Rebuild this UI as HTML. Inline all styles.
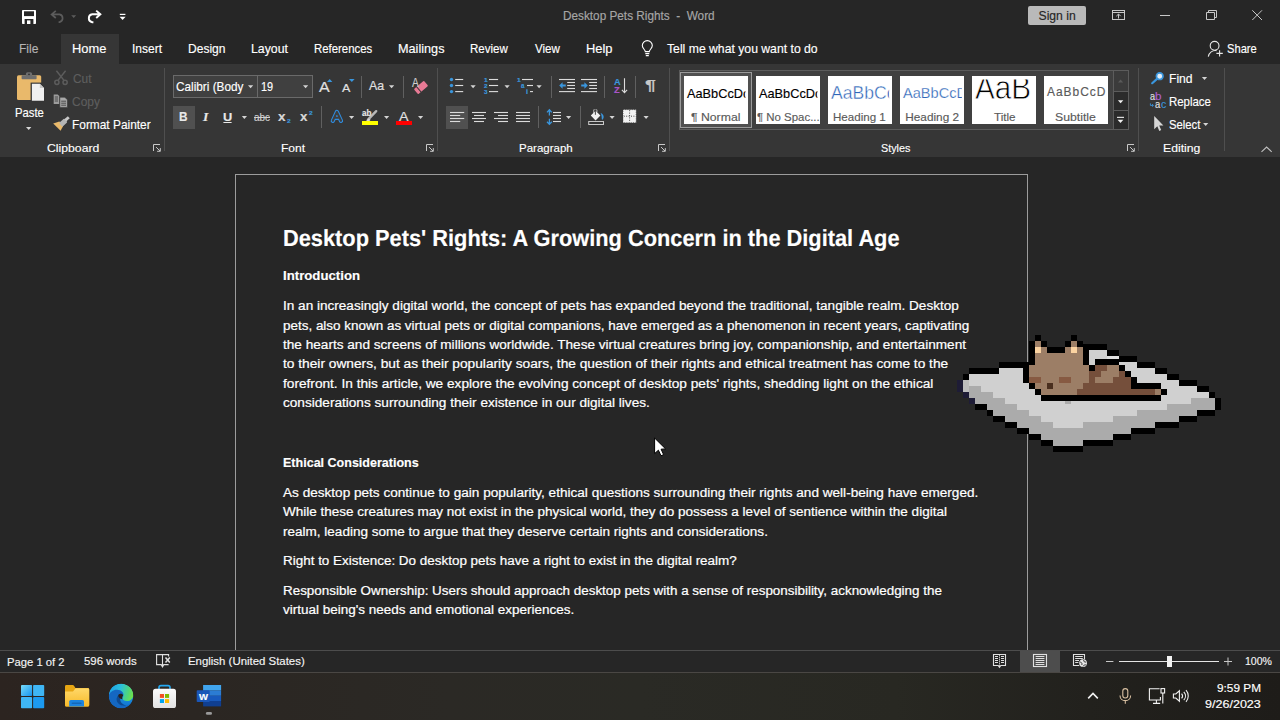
<!DOCTYPE html>
<html lang="en">
<head>
<meta charset="utf-8">
<title>Desktop Pets Rights - Word</title>
<style>
html,body{margin:0;padding:0;background:#262626;}
body{width:1280px;height:720px;overflow:hidden;font-family:"Liberation Sans",sans-serif;}
#screen{position:relative;width:1280px;height:720px;overflow:hidden;background:#262626;}
#screen div,#screen svg,#screen span{position:absolute;}
.t{white-space:pre;line-height:1;transform-origin:0 0;font-family:"Liberation Sans",sans-serif;-webkit-text-stroke:0.15px;}
#titlebar{left:0;top:0;width:1280px;height:64px;background:#262626;}
#hometab{left:61px;top:34px;width:58px;height:30px;background:#363636;}
#ribbon{left:0;top:64px;width:1280px;height:93px;background:#363636;}
#docarea{left:0;top:157px;width:1280px;height:493px;background:#262626;}
#page{left:235px;top:174px;width:791px;height:500px;border:1px solid #9c9c9c;background:#262626;}
#statusbar{left:0;top:650px;width:1280px;height:22px;background:#262626;border-top:1px solid #4c4c4c;box-sizing:border-box;}
#taskbar{left:0;top:672px;width:1280px;height:48px;background:linear-gradient(90deg,#2c2420 0%,#2b2622 15%,#2b2925 35%,#2a2a25 50%,#282822 70%,#22211d 85%,#1e1c19 100%);border-top:1px solid #4a4744;box-sizing:border-box;}
.vsep{width:1px;background:#606060;}
.gsep{width:1px;background:#4f4f4f;top:68px;height:83px;}
.hl{background:#505050;}
.cell{background:#ffffff;top:76px;width:64px;height:48px;}

</style>
</head>
<body>
<div id="screen">
<div id="titlebar"></div>
<div id="hometab"></div>
<div id="ribbon"></div>
<div id="docarea"></div>
<div id="page"></div>
<div id="statusbar"></div>
<div id="taskbar"></div>
<!-- group separators -->
<div class="gsep" style="left:164px"></div>
<div class="gsep" style="left:437px"></div>
<div class="gsep" style="left:669px"></div>
<div class="gsep" style="left:1138px"></div>
<div class="gsep" style="left:1224px"></div>
<!-- small separators -->
<div class="vsep" style="left:361px;top:76px;height:22px"></div>
<div class="vsep" style="left:403px;top:76px;height:22px"></div>
<div class="vsep" style="left:551px;top:76px;height:22px"></div>
<div class="vsep" style="left:604px;top:76px;height:22px"></div>
<div class="vsep" style="left:635px;top:76px;height:22px"></div>
<div class="vsep" style="left:321px;top:106px;height:22px"></div>
<div class="vsep" style="left:538px;top:106px;height:22px"></div>
<div class="vsep" style="left:580px;top:106px;height:22px"></div>
<!-- font boxes -->
<div style="left:173px;top:75px;width:85px;height:23px;box-sizing:border-box;border:1px solid #6a6a6a;background:#404040"></div>
<div style="left:257px;top:75px;width:56px;height:23px;box-sizing:border-box;border:1px solid #6a6a6a;background:#404040"></div>
<!-- toggled buttons -->
<div class="hl" style="left:173px;top:106px;width:22px;height:23px"></div>
<div class="hl" style="left:446px;top:106px;width:22px;height:23px"></div>
<!-- styles gallery -->
<div style="left:679px;top:70px;width:450px;height:60px;box-sizing:border-box;border:1px solid #5c5c5c;background:#404040"></div>
<div style="left:680px;top:72px;width:72px;height:56px;box-sizing:border-box;border:1px solid #9a9a9a;background:#505050"></div>
<div class="cell" style="left:684px"></div>
<div class="cell" style="left:756px"></div>
<div class="cell" style="left:828px"></div>
<div class="cell" style="left:900px"></div>
<div class="cell" style="left:972px"></div>
<div class="cell" style="left:1044px"></div>
<div style="left:1113px;top:70px;width:16px;height:60px;box-sizing:border-box;border:1px solid #5c5c5c;background:#2b2b2b"></div>
<div style="left:1114px;top:71px;width:14px;height:20px;background:#3b3b3b"></div>
<div style="left:1113px;top:91px;width:16px;height:1px;background:#5c5c5c"></div>
<div style="left:1113px;top:110px;width:16px;height:1px;background:#5c5c5c"></div>
<!-- sign in -->
<div style="left:1028px;top:6px;width:58px;height:19px;background:#b9b9b9;border-radius:2px"></div>
<!-- status bar view button -->
<div style="left:1020px;top:651px;width:40px;height:21px;background:#4d4d4d"></div>
<!-- zoom slider -->
<div style="left:1119px;top:661px;width:100px;height:1px;background:#e6e6e6"></div>
<div style="left:1167px;top:656px;width:5px;height:11px;background:#f2f2f2"></div>

<svg id="icons" style="left:0;top:0" width="1280" height="720" viewBox="0 0 1280 720" fill="none">
<!-- ===== title bar: quick access ===== -->
<g id="qat">
<rect x="22" y="10" width="14" height="14" rx="0.8" fill="#ffffff"/>
<rect x="24" y="11.3" width="10" height="4.8" fill="#262626"/>
<rect x="24.6" y="19" width="8.8" height="5" fill="#262626"/>
<rect x="27" y="20.4" width="3.4" height="3.6" fill="#ffffff"/>
<path d="M55.8 10.8 L51.6 14.4 L55.8 18 M52 14.4 H59.5 A4 4 0 0 1 59.5 22.2 H58.6" stroke="#5c5c5c" stroke-width="1.7"/>
<path d="M71.2 15.2 h5 l-2.5 2.8 z" fill="#5c5c5c"/>
<path d="M96.2 10.6 L100.4 14.3 L96.2 18 M100 14.3 H92.2 A4 4 0 0 0 92.2 22.2 H93.4" stroke="#ffffff" stroke-width="1.9"/>
<rect x="119.8" y="13.8" width="5.6" height="1.2" fill="#ffffff"/>
<path d="M119.6 16.8 h6 l-3 3.2 z" fill="#ffffff"/>
</g>
<!-- ===== window controls ===== -->
<g id="wincontrols" stroke="#c8c8c8" stroke-width="1">
<rect x="1112.5" y="10.5" width="12" height="9"/>
<path d="M1112.5 12.5 H1124.5 M1118.5 14.2 V18.5 M1116.3 16.2 L1118.5 14 L1120.7 16.2"/>
<path d="M1160 15.5 H1170"/>
<path d="M1206.5 12.5 h8 v7 h-8 z M1208.5 12.5 v-2 h8 v7 h-2"/>
<path d="M1252.3 10.3 L1262 20 M1262 10.3 L1252.3 20"/>
</g>
<!-- ===== tell me / share ===== -->
<g id="tellme" stroke="#ffffff" stroke-width="1.1">
<path d="M645.3 51.6 C645.3 49.6 642.3 48.6 642.3 45.6 A5 5 0 0 1 652.3 45.6 C652.3 48.6 649.3 49.6 649.3 51.6 Z"/>
<path d="M645.3 53.6 H649.3 M645.8 55.6 H648.8"/>
</g>
<g id="share" stroke="#e6e6e6" stroke-width="1.1">
<circle cx="1214.6" cy="45.8" r="4.4"/>
<path d="M1208.3 56.6 A7.2 7.2 0 0 1 1216.5 50.6"/>
<path d="M1219.6 50.2 V56.6 M1216.4 53.4 H1222.8"/>
</g>
<!-- ===== clipboard group ===== -->
<g id="clipboard">
<rect x="17" y="75.2" width="24.2" height="24.8" rx="1.6" fill="#e9b96b"/>
<rect x="25.9" y="72.2" width="6.2" height="5" rx="1.6" fill="#6e6e6e"/>
<circle cx="29" cy="74.4" r="1" fill="#363636"/>
<rect x="21.6" y="75.3" width="15" height="4" rx="0.8" fill="#6e6e6e"/>
<rect x="30.6" y="82.6" width="14.4" height="19" fill="#363636"/>
<path d="M31.9 83.8 H39.8 L44 88 V100.8 H31.9 Z" fill="#f0f0f0"/>
<path d="M39.8 83.8 V88 H44 Z" fill="#c8c8c8"/>
<path d="M26 127 h5.4 l-2.7 3 z" fill="#d8d8d8"/>
<!-- cut -->
<g stroke="#5c5c5c" stroke-width="1.5">
<path d="M56.4 70.8 L64.2 80.6 M65.6 70.8 L57.8 80.6"/>
<circle cx="56.9" cy="82.3" r="2.1"/>
<circle cx="65.1" cy="82.3" r="2.1"/>
</g>
<!-- copy -->
<path d="M53.7 94.5 h4 l1.6 1.6 v8 h-5.6 z" fill="#9c9c9c"/>
<path d="M54.8 97 h3.2 M54.8 99 h3.2 M54.8 101 h3.2" stroke="#363636" stroke-width="0.8"/>
<path d="M59.8 97.2 h5 l2.6 2.6 v7.6 h-7.6 z" fill="#a8a8a8" stroke="#363636" stroke-width="0.6"/>
<path d="M61.2 101.2 h4.8 M61.2 103.2 h4.8 M61.2 105.2 h4.8" stroke="#363636" stroke-width="0.8"/>
<!-- format painter -->
<path d="M53.2 123.4 L59.4 121.4 L63.4 125.6 L60.6 130.8 Z" fill="#e9b96b"/>
<rect x="59.8" y="120.1" width="6.8" height="5" rx="0.8" fill="#b4b4b4" transform="rotate(-42 63.2 122.6)"/>
<rect x="64.6" y="117.4" width="4.8" height="2.8" fill="#c8c8c8" transform="rotate(-42 67 118.8)"/>
</g>
<!-- ===== dropdown arrows & launchers ===== -->
<g id="arrows">
<path d="M248 85.2 h5.2 l-2.6 3 z" fill="#d4d4d4"/>
<path d="M303 85.2 h5.2 l-2.6 3 z" fill="#d4d4d4"/>
<path d="M241.8 116 h5.2 l-2.6 3 z" fill="#d4d4d4"/>
<path d="M389 85.3 h5.2 l-2.6 3 z" fill="#d4d4d4"/>
<path d="M349 116 h5.2 l-2.6 3 z" fill="#d4d4d4"/>
<path d="M384 116 h5.2 l-2.6 3 z" fill="#d4d4d4"/>
<path d="M418 116 h5.2 l-2.6 3 z" fill="#d4d4d4"/>
<path d="M470.5 85.3 h5.2 l-2.6 3 z" fill="#d4d4d4"/>
<path d="M504.5 85.3 h5.2 l-2.6 3 z" fill="#d4d4d4"/>
<path d="M536.5 85.3 h5.2 l-2.6 3 z" fill="#d4d4d4"/>
<path d="M566 116 h5.2 l-2.6 3 z" fill="#d4d4d4"/>
<path d="M609.5 116 h5.2 l-2.6 3 z" fill="#d4d4d4"/>
<path d="M643.5 116 h5.2 l-2.6 3 z" fill="#d4d4d4"/>
<path d="M1201.9 77.1 h5.2 l-2.6 3 z" fill="#d4d4d4"/>
<path d="M1203.1 123.1 h5.2 l-2.6 3 z" fill="#d4d4d4"/>
<path d="M153.5 151.0 V144.5 H160.0" stroke="#c8c8c8" stroke-width="1"/><path d="M156.1 147.1 L160.1 151.1 M157.1 151.3 H160.3 V148.1" stroke="#c8c8c8" stroke-width="1"/>
<path d="M426.5 151.0 V144.5 H433.0" stroke="#c8c8c8" stroke-width="1"/><path d="M429.1 147.1 L433.1 151.1 M430.1 151.3 H433.3 V148.1" stroke="#c8c8c8" stroke-width="1"/>
<path d="M658.5 151.0 V144.5 H665.0" stroke="#c8c8c8" stroke-width="1"/><path d="M661.1 147.1 L665.1 151.1 M662.1 151.3 H665.3 V148.1" stroke="#c8c8c8" stroke-width="1"/>
<path d="M1127.5 151.0 V144.5 H1134.0" stroke="#c8c8c8" stroke-width="1"/><path d="M1130.1 147.1 L1134.1 151.1 M1131.1 151.3 H1134.3 V148.1" stroke="#c8c8c8" stroke-width="1"/>
</g>
<!-- ===== font group ===== -->
<g id="fontgroup">
<path d="M327 82 h5.4 l-2.7 -2.9 z" fill="#3a96dd"/>
<path d="M349 79.1 h5.6 l-2.8 3 z" fill="#3a96dd"/>
<rect x="223.4" y="122" width="8.2" height="1" fill="#e8e8e8"/>
<!-- clear formatting eraser -->
<g transform="rotate(-40 421 87.5)">
<rect x="414.4" y="84.2" width="13.2" height="6.6" rx="1" fill="#e87a95"/>
<rect x="417.6" y="84" width="1" height="7" fill="#363636"/>
</g>
<!-- text effects -->
<path d="M332.8 120.8 L336.9 111.9 L341 120.8 M334.4 117.8 H339.4" stroke="#2f8de0" stroke-width="4.2" stroke-linejoin="round" stroke-linecap="round"/>
<path d="M332.8 120.8 L336.9 111.9 L341 120.8 M334.4 117.8 H339.4" stroke="#3e3e3e" stroke-width="2.1" stroke-linejoin="round" stroke-linecap="round"/>
<!-- highlighter -->
<path d="M376.2 111.2 L368 119.6" stroke="#b8b8b8" stroke-width="2.4" stroke-linecap="round"/>
<path d="M368.6 118.4 L366 121 H369.4 L370.6 119.8 Z" fill="#d8d8d8"/>
<rect x="362" y="121" width="16" height="4" fill="#ffff00"/>
<rect x="396" y="121" width="16" height="4" fill="#ff0000"/>
</g>
<!-- ===== paragraph group ===== -->
<g id="paragraph">
<circle cx="451.5" cy="79.5" r="1.7" fill="#3a96dd"/>
<rect x="455.2" y="78.95" width="8.00" height="1.1" fill="#dcdcdc"/>
<rect x="489" y="78.95" width="9.10" height="1.1" fill="#dcdcdc"/>
<circle cx="451.5" cy="85.5" r="1.7" fill="#3a96dd"/>
<rect x="455.2" y="84.95" width="8.00" height="1.1" fill="#dcdcdc"/>
<rect x="489" y="84.95" width="9.10" height="1.1" fill="#dcdcdc"/>
<circle cx="451.5" cy="91.6" r="1.7" fill="#3a96dd"/>
<rect x="455.2" y="91.05" width="8.00" height="1.1" fill="#dcdcdc"/>
<rect x="489" y="91.05" width="9.10" height="1.1" fill="#dcdcdc"/>
<rect x="522" y="78.95" width="11.00" height="1.1" fill="#dcdcdc"/>
<rect x="527" y="84.95" width="6.00" height="1.1" fill="#dcdcdc"/>
<rect x="530" y="91.05" width="3.00" height="1.1" fill="#dcdcdc"/>
<rect x="450" y="111.95" width="14.20" height="1.1" fill="#dcdcdc"/>
<rect x="450" y="114.95" width="10.20" height="1.1" fill="#dcdcdc"/>
<rect x="450" y="117.95" width="14.20" height="1.1" fill="#dcdcdc"/>
<rect x="450" y="120.95" width="10.20" height="1.1" fill="#dcdcdc"/>
<rect x="472" y="111.95" width="14.00" height="1.1" fill="#dcdcdc"/>
<rect x="474" y="114.95" width="10.00" height="1.1" fill="#dcdcdc"/>
<rect x="472" y="117.95" width="14.00" height="1.1" fill="#dcdcdc"/>
<rect x="474" y="120.95" width="10.00" height="1.1" fill="#dcdcdc"/>
<rect x="494" y="111.95" width="14.00" height="1.1" fill="#dcdcdc"/>
<rect x="498" y="114.95" width="10.00" height="1.1" fill="#dcdcdc"/>
<rect x="494" y="117.95" width="14.00" height="1.1" fill="#dcdcdc"/>
<rect x="498" y="120.95" width="10.00" height="1.1" fill="#dcdcdc"/>
<rect x="516" y="111.95" width="14.00" height="1.1" fill="#dcdcdc"/>
<rect x="516" y="114.95" width="14.00" height="1.1" fill="#dcdcdc"/>
<rect x="516" y="117.95" width="14.00" height="1.1" fill="#dcdcdc"/>
<rect x="516" y="120.95" width="14.00" height="1.1" fill="#dcdcdc"/>
<rect x="553" y="111.95" width="8.00" height="1.1" fill="#dcdcdc"/>
<rect x="553" y="114.95" width="8.00" height="1.1" fill="#dcdcdc"/>
<rect x="553" y="117.95" width="8.00" height="1.1" fill="#dcdcdc"/>
<rect x="553" y="120.95" width="8.00" height="1.1" fill="#dcdcdc"/>
<path d="M549.4 110 V115.4 M547 112.4 L549.4 109.8 L551.8 112.4 M549.4 118.8 V124.2 M547 121.8 L549.4 124.4 L551.8 121.8" stroke="#3a96dd" stroke-width="1.3"/>
<rect x="559" y="78.95" width="16.00" height="1.1" fill="#dcdcdc"/>
<rect x="559" y="91.05" width="16.00" height="1.1" fill="#dcdcdc"/>
<rect x="567.2" y="81.95" width="7.80" height="1.1" fill="#dcdcdc"/>
<rect x="567.2" y="84.95" width="7.80" height="1.1" fill="#dcdcdc"/>
<rect x="567.2" y="87.95" width="7.80" height="1.1" fill="#dcdcdc"/>
<rect x="581" y="78.95" width="16.00" height="1.1" fill="#dcdcdc"/>
<rect x="581" y="91.05" width="16.00" height="1.1" fill="#dcdcdc"/>
<rect x="589.2" y="81.95" width="7.80" height="1.1" fill="#dcdcdc"/>
<rect x="589.2" y="84.95" width="7.80" height="1.1" fill="#dcdcdc"/>
<rect x="589.2" y="87.95" width="7.80" height="1.1" fill="#dcdcdc"/>
<path d="M559.2 85.5 L562.6 82.2 V84.4 H565.8 V86.6 H562.6 V88.8 Z" fill="#3a96dd"/>
<path d="M587.8 85.5 L584.4 82.2 V84.4 H581.2 V86.6 H584.4 V88.8 Z" fill="#3a96dd"/>
<path d="M624.5 78.2 V92.4 M621.9 89.8 L624.5 92.6 L627.1 89.8" stroke="#dcdcdc" stroke-width="1.1"/>
<path d="M593.6 113 V109.8 H597 V112" stroke="#bdbdbd" stroke-width="0.8"/>
<path d="M595.6 110.8 L600.4 115.6 L595.6 120.4 L590.8 115.6 Z" fill="#f2f2f2"/>
<path d="M595.4 109.6 V114.8" stroke="#363636" stroke-width="0.9"/>
<path d="M600.6 113 C604 114.4 604.6 117.6 602.4 119.8 C601.6 119.6 601.8 118.6 601.6 116.6 C601.5 115.4 601.2 114.2 600.6 113 Z" fill="#3a96dd"/>
<rect x="588.7" y="121.5" width="14.8" height="3" stroke="#c8c8c8" stroke-width="1"/>
<rect x="623" y="109.6" width="13.2" height="13.2" fill="#f2f2f2"/>
<path d="M623.8 116.2 H635.6 M629.6 110.2 V122.4" stroke="#363636" stroke-width="0.9" stroke-dasharray="1 1.4"/>
<path d="M623 109.6 h13.2 v13.2 h-13.2 z" stroke="#363636" stroke-width="0.7" stroke-dasharray="1 1.2"/>
</g>
<!-- ===== gallery scroll ===== -->
<g id="galscroll">
<path d="M1118 82.4 h5.2 l-2.6 -3 z" fill="#5a5a5a"/>
<path d="M1117.9 100.2 h5.4 l-2.7 3 z" fill="#f0f0f0"/>
<rect x="1117" y="116.8" width="7" height="1.1" fill="#f0f0f0"/>
<path d="M1117.6 119.8 h5.8 l-2.9 3.2 z" fill="#f0f0f0"/>
</g>
<!-- ===== editing group ===== -->
<g id="editing">
<path d="M1157 78.9 L1152.2 83.2" stroke="#3a96dd" stroke-width="2.2" stroke-linecap="round"/>
<circle cx="1159.7" cy="76.2" r="3.3" fill="#e4eef8" stroke="#3a96dd" stroke-width="1.7"/>
<path d="M1150.4 103.4 V105.4 H1153.2 M1152 104.2 L1153.4 105.4 L1152 106.6" stroke="#3a96dd" stroke-width="0.9"/>
<path d="M1154.2 116 V129.2 L1157.3 126.3 L1159.3 130.9 L1161.2 130 L1159.2 125.6 L1163.4 125.4 Z" fill="#d6d6d6"/>
</g>
<!-- ===== status bar icons ===== -->
<g id="statusicons" stroke="#e0e0e0" stroke-width="1">
<!-- proofing -->
<path d="M162.5 654.6 H156.6 V664.6 H161.2 L162.5 666.8 L163.8 664.6 H168.6 M162.5 654.6 V666 M162.5 654.6 H168.6 V656.4" stroke-width="1.1"/>
<path d="M165.5 657.4 L169.8 662.6 M169.8 657.4 L165.5 662.6" stroke-width="1.5"/>
<!-- read mode -->
<path d="M999.5 654.5 H993.5 V665.5 H998.2 L999.5 667.4 L1000.8 665.5 H1005.5 V654.5 H999.5" stroke-width="1.1"/>
<path d="M999.5 654.6 V666.4" stroke-width="1" stroke-dasharray="1.2 0.8"/>
<path d="M995 656.5 H998 M995 658.5 H998 M995 660.5 H998 M995 662.5 H998 M1001 656.5 H1004 M1001 658.5 H1004 M1001 660.5 H1004 M1001 662.5 H1004" stroke-width="1"/>
<!-- print layout -->
<rect x="1033.5" y="654.5" width="13" height="12" stroke-width="1.1"/>
<path d="M1035.6 656.5 H1044.4 M1035.6 658.5 H1044.4 M1035.6 660.5 H1044.4 M1035.6 662.5 H1044.4 M1035.6 664.5 H1044.4" stroke-width="1"/>
<!-- web layout -->
<path d="M1079.2 665.5 H1073.5 V654.5 H1084.5 V659.2" stroke-width="1.1"/>
<path d="M1075.2 656.5 H1082.8 M1075.2 658.5 H1082.8 M1075.2 660.5 H1079 M1075.2 662.5 H1078.4" stroke-width="1"/>
<circle cx="1083.1" cy="663.1" r="3.9" fill="#e6e6e6" stroke="none"/>
<path d="M1080.2 662 C1081.6 662.2 1082.4 663.4 1081.8 665 M1083.8 660 C1083.4 661.4 1084.4 662.4 1086.2 662 M1083 666.4 C1083.6 665.2 1084.8 664.6 1086.4 665" stroke="#262626" stroke-width="0.9"/>
<!-- zoom +/- -->
<path d="M1106 661.5 H1113.4 M1224 661.5 H1232 M1228 657.5 V665.5" stroke="#c8c8c8"/>
</g>
<!-- ===== taskbar icons ===== -->
<defs>
<linearGradient id="gwin" x1="0" y1="0" x2="1" y2="1"><stop offset="0" stop-color="#78dcfb"/><stop offset="1" stop-color="#1492ee"/></linearGradient>
<linearGradient id="gfold" x1="0" y1="0" x2="0" y2="1"><stop offset="0" stop-color="#ffd869"/><stop offset="1" stop-color="#f7ba2a"/></linearGradient>
<linearGradient id="gedge1" x1="0" y1="0" x2="0" y2="1"><stop offset="0" stop-color="#2bb4ea"/><stop offset="1" stop-color="#0e6fd0"/></linearGradient>
<linearGradient id="gedge2" x1="0" y1="0.3" x2="1" y2="0.5"><stop offset="0" stop-color="#1e9fe6"/><stop offset="0.45" stop-color="#2bbfdc"/><stop offset="0.8" stop-color="#4fd67a"/><stop offset="1" stop-color="#6ee04e"/></linearGradient>
<linearGradient id="gstore" x1="0" y1="0" x2="0" y2="1"><stop offset="0" stop-color="#fbfbfb"/><stop offset="1" stop-color="#e2e2e2"/></linearGradient>
<clipPath id="edgeclip"><circle cx="121.1" cy="696" r="12.3"/></clipPath>
</defs>
<g id="taskicons">
<!-- start -->
<rect x="21" y="685" width="11.1" height="11.1" rx="0.8" fill="url(#gwin)"/>
<rect x="33.1" y="685" width="11.1" height="11.1" rx="0.8" fill="#3fb6f5"/>
<rect x="21" y="697.1" width="11.1" height="11.1" rx="0.8" fill="#3fb6f5"/>
<rect x="33.1" y="697.1" width="11.1" height="11.1" rx="0.8" fill="#1c9af0"/>
<!-- explorer -->
<path d="M65 686.4 Q65 685 66.4 685 H72.6 Q73.6 685 74.2 686 L75.4 688 H87.8 Q89.2 688 89.2 689.4 V705.2 Q89.2 706.6 87.8 706.6 H66.4 Q65 706.6 65 705.2 Z" fill="#e7a613"/>
<path d="M65 691.4 H73 L75.6 688.2 H87.8 Q89.2 688.2 89.2 689.6 V705.2 Q89.2 706.6 87.8 706.6 H66.4 Q65 706.6 65 705.2 Z" fill="url(#gfold)"/>
<path d="M69.2 706.6 V701.6 Q69.2 700 70.8 700 H82.4 Q84 700 84 701.6 V706.6 Z" fill="#1b84df"/>
<rect x="71.6" y="702.6" width="10" height="1.4" rx="0.7" fill="#1568b8"/>
<!-- edge -->
<g clip-path="url(#edgeclip)">
<circle cx="121.1" cy="696" r="12.3" fill="url(#gedge1)"/>
<path d="M108.8 696 C108.8 688 114.6 683.6 121.1 683.6 C128.6 683.6 133.4 689 133.4 694.4 C133.4 698.4 130.4 701 126.8 701 C123.8 701 122.2 699.6 122.6 698 C123.6 696.4 123.8 695 123.2 693.6 C122 691 119 690 116.4 690.4 C112.6 691 109.8 693.4 108.8 696 Z" fill="url(#gedge2)"/>
<path d="M108.8 696 C109.6 692 113.4 689.6 117.2 689.8 C121.2 690 123.6 692.4 123.4 695 C120.6 693 116.8 694.6 116.4 698.6 C116 703.2 121 707 127 705.4 C129 704.8 130.8 703.6 132 702.2 C130 706.2 125.8 708.3 121.1 708.3 C114.2 708.3 108.8 703 108.8 696 Z" fill="#1467c2"/>
<path d="M123.4 695 C120.8 693.2 117 694.6 116.4 698.6 C116 703 120.6 706.8 126.4 705.6 C122.4 705 119.8 701.8 120.2 698.6 C120.4 696.8 121.6 695.4 123.4 695 Z" fill="#0d4a94"/>
<path d="M118.6 694.4 C120.2 693.4 122.2 693.8 123.2 695.2 C122.4 696.6 122 698 122.4 699.2 C121 699.2 119 698.2 118.4 696.6 C118.2 695.8 118.2 695 118.6 694.4 Z" fill="#2a221e"/>
</g>
<!-- store -->
<path d="M159 690.6 V687.6 Q159 685.6 161 685.6 H168 Q170 685.6 170 687.6 V690.6" stroke="#25a9f2" stroke-width="1.6"/>
<rect x="153" y="688.8" width="23" height="19.2" rx="2.6" fill="url(#gstore)"/>
<rect x="159.9" y="694" width="4.1" height="3.9" fill="#f25022"/>
<rect x="165" y="694" width="4.1" height="3.9" fill="#7fba00"/>
<rect x="159.9" y="699.1" width="4.1" height="3.9" fill="#00a4ef"/>
<rect x="165" y="699.1" width="4.1" height="3.9" fill="#ffb900"/>
<!-- word -->
<rect x="203.1" y="685" width="18" height="5.5" fill="#41a5ee"/>
<rect x="203.1" y="690.4" width="18" height="5.4" fill="#2b7cd3"/>
<rect x="203.1" y="695.7" width="18" height="5.4" fill="#185abd"/>
<rect x="203.1" y="701" width="18" height="5.4" fill="#103f91"/>
<rect x="196.7" y="690.2" width="13" height="11.8" rx="0.8" fill="#1a56b8"/>
<rect x="205.9" y="712.1" width="6.1" height="2.7" rx="1.35" fill="#9a9a9a"/>
</g>
<!-- ===== tray ===== -->
<g id="tray" stroke="#f2f2f2" stroke-width="1.1">
<path d="M1088.2 698.4 L1093 693.4 L1097.8 698.4" stroke-width="1.6"/>
<g stroke="#d9c0a2">
<rect x="1122.8" y="688.6" width="5" height="9.4" rx="2.5"/>
<path d="M1120 695.4 C1120 702.4 1130.6 702.4 1130.6 695.4 M1125.3 700.8 V703.8"/>
</g>
<path d="M1160.4 697 V700 H1149.4 V688.8 H1159.6 M1153 703.4 H1160.2 M1156.4 700.2 V703.4"/>
<rect x="1161" y="688.6" width="3.6" height="4.4"/>
<path d="M1162.8 693 V703.6" />
<path d="M1173.4 694 H1175.8 L1179.4 690.8 V701.2 L1175.8 698 H1173.4 Z"/>
<path d="M1181.6 693.6 C1182.8 695 1182.8 697 1181.6 698.4 M1183.8 691.8 C1186 694.2 1186 697.8 1183.8 700.2 M1186 690.2 C1189 693.6 1189 698.4 1186 701.8"/>
</g>
<path d="M1261.5 151.8 L1266.6 147 L1271.7 151.8" stroke="#c0c0c0" stroke-width="1.1"/>
<!-- ===== mouse pointer ===== -->
<path d="M654.6 438 V453.6 L658.4 450.2 L661 455.8 L663.6 454.6 L661.1 449.2 L665.6 448.9 Z" fill="#ffffff" stroke="#000000" stroke-width="1" stroke-linejoin="miter"/>
</svg>

<svg id="cat" style="left:0;top:0" width="1280" height="720" viewBox="0 0 1280 720" shape-rendering="crispEdges">
<rect x="1083" y="344" width="24" height="6" fill="#000000"/>
<rect x="1083" y="350" width="6" height="6" fill="#000000"/>
<rect x="1089" y="350" width="18" height="6" fill="#d0d0d0"/>
<rect x="1107" y="350" width="12" height="6" fill="#000000"/>
<rect x="1089" y="356" width="18" height="6" fill="#d0d0d0"/>
<rect x="1107" y="356" width="12" height="6" fill="#dedede"/>
<rect x="1119" y="356" width="18" height="6" fill="#000000"/>
<rect x="999" y="362" width="30" height="6" fill="#000000"/>
<rect x="1029" y="362" width="108" height="6" fill="#d0d0d0"/>
<rect x="1137" y="362" width="18" height="6" fill="#000000"/>
<rect x="969" y="368" width="30" height="6" fill="#000000"/>
<rect x="999" y="368" width="156" height="6" fill="#d0d0d0"/>
<rect x="1155" y="368" width="12" height="6" fill="#000000"/>
<rect x="963" y="374" width="6" height="6" fill="#000000"/>
<rect x="969" y="374" width="198" height="6" fill="#d0d0d0"/>
<rect x="1167" y="374" width="12" height="6" fill="#000000"/>
<rect x="957" y="380" width="6" height="6" fill="#1e1c36"/>
<rect x="963" y="380" width="6" height="6" fill="#bdbdbd"/>
<rect x="969" y="380" width="210" height="6" fill="#d0d0d0"/>
<rect x="1179" y="380" width="18" height="6" fill="#000000"/>
<rect x="957" y="386" width="6" height="6" fill="#1e1c36"/>
<rect x="963" y="386" width="6" height="6" fill="#bdbdbd"/>
<rect x="969" y="386" width="12" height="6" fill="#ababab"/>
<rect x="981" y="386" width="216" height="6" fill="#d0d0d0"/>
<rect x="1197" y="386" width="12" height="6" fill="#000000"/>
<rect x="963" y="392" width="6" height="6" fill="#1e1c36"/>
<rect x="969" y="392" width="24" height="6" fill="#ababab"/>
<rect x="993" y="392" width="216" height="6" fill="#d0d0d0"/>
<rect x="1209" y="392" width="6" height="6" fill="#000000"/>
<rect x="969" y="398" width="6" height="6" fill="#1e1c36"/>
<rect x="975" y="398" width="30" height="6" fill="#ababab"/>
<rect x="1005" y="398" width="186" height="6" fill="#d0d0d0"/>
<rect x="1065" y="398" width="6" height="6" fill="#ababab"/>
<rect x="1191" y="398" width="24" height="6" fill="#ababab"/>
<rect x="1215" y="398" width="6" height="6" fill="#000000"/>
<rect x="975" y="404" width="12" height="6" fill="#000000"/>
<rect x="987" y="404" width="30" height="6" fill="#ababab"/>
<rect x="1017" y="404" width="150" height="6" fill="#d0d0d0"/>
<rect x="1167" y="404" width="48" height="6" fill="#ababab"/>
<rect x="1215" y="404" width="6" height="6" fill="#000000"/>
<rect x="987" y="410" width="6" height="6" fill="#000000"/>
<rect x="993" y="410" width="36" height="6" fill="#ababab"/>
<rect x="1029" y="410" width="108" height="6" fill="#d0d0d0"/>
<rect x="1137" y="410" width="60" height="6" fill="#ababab"/>
<rect x="1197" y="410" width="18" height="6" fill="#000000"/>
<rect x="993" y="416" width="12" height="6" fill="#000000"/>
<rect x="1005" y="416" width="36" height="6" fill="#ababab"/>
<rect x="1041" y="416" width="72" height="6" fill="#d0d0d0"/>
<rect x="1113" y="416" width="66" height="6" fill="#ababab"/>
<rect x="1179" y="416" width="18" height="6" fill="#000000"/>
<rect x="1005" y="422" width="12" height="6" fill="#000000"/>
<rect x="1017" y="422" width="36" height="6" fill="#ababab"/>
<rect x="1053" y="422" width="30" height="6" fill="#d0d0d0"/>
<rect x="1083" y="422" width="72" height="6" fill="#ababab"/>
<rect x="1155" y="422" width="24" height="6" fill="#000000"/>
<rect x="1017" y="428" width="12" height="6" fill="#000000"/>
<rect x="1029" y="428" width="102" height="6" fill="#ababab"/>
<rect x="1131" y="428" width="24" height="6" fill="#000000"/>
<rect x="1029" y="434" width="12" height="6" fill="#000000"/>
<rect x="1041" y="434" width="72" height="6" fill="#ababab"/>
<rect x="1113" y="434" width="18" height="6" fill="#000000"/>
<rect x="1041" y="440" width="12" height="6" fill="#000000"/>
<rect x="1053" y="440" width="30" height="6" fill="#ababab"/>
<rect x="1083" y="440" width="30" height="6" fill="#000000"/>
<rect x="1053" y="446" width="30" height="6" fill="#000000"/>
<rect x="1035" y="335" width="6" height="6" fill="#000000"/>
<rect x="1071" y="335" width="6" height="6" fill="#000000"/>
<rect x="1029" y="341" width="6" height="6" fill="#000000"/>
<rect x="1035" y="341" width="6" height="6" fill="#9c7e66"/>
<rect x="1041" y="341" width="6" height="6" fill="#000000"/>
<rect x="1065" y="341" width="6" height="6" fill="#000000"/>
<rect x="1071" y="341" width="6" height="6" fill="#9c7e66"/>
<rect x="1077" y="341" width="6" height="6" fill="#000000"/>
<rect x="1029" y="347" width="6" height="6" fill="#000000"/>
<rect x="1035" y="347" width="6" height="6" fill="#fbd3a1"/>
<rect x="1041" y="347" width="6" height="6" fill="#9c7e66"/>
<rect x="1047" y="347" width="18" height="6" fill="#000000"/>
<rect x="1065" y="347" width="6" height="6" fill="#9c7e66"/>
<rect x="1071" y="347" width="6" height="6" fill="#fbd3a1"/>
<rect x="1077" y="347" width="6" height="6" fill="#9c7e66"/>
<rect x="1083" y="347" width="6" height="6" fill="#000000"/>
<rect x="1029" y="353" width="6" height="6" fill="#000000"/>
<rect x="1035" y="353" width="48" height="6" fill="#9c7e66"/>
<rect x="1083" y="353" width="6" height="6" fill="#000000"/>
<rect x="1029" y="359" width="6" height="6" fill="#000000"/>
<rect x="1035" y="359" width="48" height="6" fill="#9c7e66"/>
<rect x="1083" y="359" width="6" height="6" fill="#000000"/>
<rect x="1095" y="359" width="24" height="6" fill="#000000"/>
<rect x="1023" y="365" width="6" height="6" fill="#000000"/>
<rect x="1029" y="365" width="60" height="6" fill="#9c7e66"/>
<rect x="1089" y="365" width="6" height="6" fill="#000000"/>
<rect x="1095" y="365" width="12" height="6" fill="#754f3b"/>
<rect x="1107" y="365" width="12" height="6" fill="#9c7e66"/>
<rect x="1119" y="365" width="6" height="6" fill="#000000"/>
<rect x="1023" y="371" width="6" height="6" fill="#000000"/>
<rect x="1029" y="371" width="60" height="6" fill="#9c7e66"/>
<rect x="1089" y="371" width="12" height="6" fill="#754f3b"/>
<rect x="1101" y="371" width="18" height="6" fill="#9c7e66"/>
<rect x="1119" y="371" width="6" height="6" fill="#754f3b"/>
<rect x="1125" y="371" width="6" height="6" fill="#000000"/>
<rect x="1023" y="377" width="6" height="6" fill="#000000"/>
<rect x="1029" y="377" width="12" height="6" fill="#875a42"/>
<rect x="1041" y="377" width="18" height="6" fill="#9c7e66"/>
<rect x="1059" y="377" width="12" height="6" fill="#875a42"/>
<rect x="1071" y="377" width="18" height="6" fill="#9c7e66"/>
<rect x="1089" y="377" width="6" height="6" fill="#754f3b"/>
<rect x="1095" y="377" width="18" height="6" fill="#9c7e66"/>
<rect x="1113" y="377" width="18" height="6" fill="#754f3b"/>
<rect x="1131" y="377" width="6" height="6" fill="#000000"/>
<rect x="1029" y="383" width="6" height="6" fill="#000000"/>
<rect x="1035" y="383" width="12" height="6" fill="#9c7e66"/>
<rect x="1047" y="383" width="6" height="6" fill="#4a2f1f"/>
<rect x="1053" y="383" width="30" height="6" fill="#9c7e66"/>
<rect x="1083" y="383" width="48" height="6" fill="#754f3b"/>
<rect x="1131" y="383" width="30" height="6" fill="#000000"/>
<rect x="1035" y="389" width="6" height="6" fill="#000000"/>
<rect x="1041" y="389" width="36" height="6" fill="#9c7e66"/>
<rect x="1077" y="389" width="78" height="6" fill="#754f3b"/>
<rect x="1155" y="389" width="6" height="6" fill="#9c7e66"/>
<rect x="1161" y="389" width="6" height="6" fill="#000000"/>
<rect x="1041" y="395" width="120" height="6" fill="#000000"/>
</svg>
<span class="t" style="left:563.03px;top:10px;font-size:12.2px;color:#a6a6a6;transform:scaleX(0.9662);">Desktop Pets Rights  -  Word</span>
<span class="t" style="left:1038.50px;top:10px;font-size:12.2px;color:#262626;transform:scaleX(1.0000);">Sign in</span>
<span class="t" style="left:19.03px;top:43px;font-size:12.4px;color:#b4b4b4;transform:scaleX(0.9730);">File</span>
<span class="t" style="left:71.96px;top:43px;font-size:12.4px;color:#ffffff;transform:scaleX(1.0394);">Home</span>
<span class="t" style="left:132.03px;top:43px;font-size:12.4px;color:#ffffff;transform:scaleX(0.9667);">Insert</span>
<span class="t" style="left:188.03px;top:43px;font-size:12.4px;color:#ffffff;transform:scaleX(0.9730);">Design</span>
<span class="t" style="left:251.01px;top:43px;font-size:12.4px;color:#ffffff;transform:scaleX(0.9931);">Layout</span>
<span class="t" style="left:314.08px;top:43px;font-size:12.4px;color:#ffffff;transform:scaleX(0.9194);">References</span>
<span class="t" style="left:397.98px;top:43px;font-size:12.4px;color:#ffffff;transform:scaleX(1.0227);">Mailings</span>
<span class="t" style="left:470.07px;top:43px;font-size:12.4px;color:#ffffff;transform:scaleX(0.9308);">Review</span>
<span class="t" style="left:535.00px;top:43px;font-size:12.4px;color:#ffffff;transform:scaleX(0.9346);">View</span>
<span class="t" style="left:585.96px;top:43px;font-size:12.4px;color:#ffffff;transform:scaleX(1.0417);">Help</span>
<span class="t" style="left:666.75px;top:43px;font-size:12.4px;color:#ffffff;transform:scaleX(0.9852);">Tell me what you want to do</span>
<span class="t" style="left:1226.55px;top:43px;font-size:12.4px;color:#ffffff;transform:scaleX(0.8992);">Share</span>
<span class="t" style="left:14.59px;top:107px;font-size:12.4px;color:#ffffff;transform:scaleX(0.9091);">Paste</span>
<span class="t" style="left:72.52px;top:73px;font-size:12.4px;color:#5e5e5e;transform:scaleX(0.9600);">Cut</span>
<span class="t" style="left:72.02px;top:96px;font-size:12.4px;color:#5e5e5e;transform:scaleX(0.9649);">Copy</span>
<span class="t" style="left:71.54px;top:119px;font-size:12.4px;color:#ffffff;transform:scaleX(0.9598);">Format Painter</span>
<span class="t" style="left:47.48px;top:143px;font-size:11.8px;color:#ffffff;transform:scaleX(1.0355);">Clipboard</span>
<span class="t" style="left:281.04px;top:143px;font-size:11.8px;color:#ffffff;transform:scaleX(1.0198);">Font</span>
<span class="t" style="left:518.67px;top:143px;font-size:11.8px;color:#ffffff;transform:scaleX(0.9749);">Paragraph</span>
<span class="t" style="left:880.74px;top:143px;font-size:11.8px;color:#ffffff;transform:scaleX(0.9152);">Styles</span>
<span class="t" style="left:1162.82px;top:143px;font-size:11.8px;color:#ffffff;transform:scaleX(1.0360);">Editing</span>
<span class="t" style="left:175.52px;top:81px;font-size:12.4px;color:#ffffff;transform:scaleX(0.9504);">Calibri (Body</span>
<span class="t" style="left:261.34px;top:81px;font-size:12.4px;color:#ffffff;transform:scaleX(0.8800);">19</span>
<span class="t" style="left:178.86px;top:111px;font-size:12px;color:#e8e8e8;font-weight:700;transform:scaleX(0.9867);">B</span>
<span class="t" style="left:202.77px;top:111px;font-size:12.5px;color:#e8e8e8;font-weight:700;font-style:italic;font-family:'Liberation Serif',serif;transform:scaleX(1.0909);">I</span>
<span class="t" style="left:222.95px;top:111px;font-size:11.6px;color:#e8e8e8;font-weight:700;transform:scaleX(1.1034);">U</span>
<span class="t" style="left:254.00px;top:112px;font-size:11px;color:#d0d0d0;text-decoration:line-through;transform:scaleX(0.9014);">abc</span>
<span class="t" style="left:278.00px;top:110px;font-size:13.4px;color:#d8d8d8;font-weight:700;transform:scaleX(1.0133);">x</span>
<span class="t" style="left:286.60px;top:118px;font-size:6px;color:#3a96dd;font-weight:700;transform:scaleX(1.1077);">2</span>
<span class="t" style="left:300.00px;top:110px;font-size:13.4px;color:#d8d8d8;font-weight:700;transform:scaleX(1.0000);">x</span>
<span class="t" style="left:308.60px;top:110px;font-size:6px;color:#3a96dd;font-weight:700;transform:scaleX(1.1077);">2</span>
<span class="t" style="left:318.60px;top:80px;font-size:14px;color:#e0e0e0;transform:scaleX(1.1459);">A</span>
<span class="t" style="left:341.60px;top:83px;font-size:10.8px;color:#e0e0e0;transform:scaleX(1.1586);">A</span>
<span class="t" style="left:369.00px;top:80px;font-size:12.4px;color:#e0e0e0;transform:scaleX(0.9967);">Aa</span>
<span class="t" style="left:399.40px;top:110px;font-size:13.4px;color:#e0e0e0;transform:scaleX(1.0667);">A</span>
<span class="t" style="left:361.77px;top:109px;font-size:9px;color:#e8e8e8;font-weight:700;transform:scaleX(0.9000);">ab</span>
<span class="t" style="left:412.20px;top:77px;font-size:12px;color:#d0d0d0;transform:scaleX(0.8500);">A</span>
<span class="t" style="left:645.12px;top:78px;font-size:14.5px;color:#c8c8c8;font-weight:700;transform:scaleX(1.3517);">¶</span>
<span class="t" style="left:483.72px;top:77px;font-size:6px;color:#3a96dd;font-weight:700;transform:scaleX(1.1333);">1</span>
<span class="t" style="left:484.00px;top:83px;font-size:6px;color:#3a96dd;font-weight:700;transform:scaleX(1.0462);">2</span>
<span class="t" style="left:484.00px;top:89px;font-size:6px;color:#3a96dd;font-weight:700;transform:scaleX(1.0462);">3</span>
<span class="t" style="left:516.72px;top:77px;font-size:6px;color:#3a96dd;font-weight:700;transform:scaleX(1.1333);">1</span>
<span class="t" style="left:520.80px;top:83px;font-size:6.4px;color:#3a96dd;font-weight:700;transform:scaleX(0.9600);">a</span>
<span class="t" style="left:525.52px;top:89px;font-size:6.4px;color:#3a96dd;font-weight:700;transform:scaleX(1.1200);">i</span>
<span class="t" style="left:687.00px;top:88px;font-size:12.6px;color:#000000;transform:scaleX(1.0122);clip-path:inset(-5px 3.90px -5px -5px);">AaBbCcDc</span>
<span class="t" style="left:691.24px;top:112px;font-size:11.8px;color:#5a5a5a;transform:scaleX(1.0374);">¶ Normal</span>
<span class="t" style="left:759.00px;top:88px;font-size:12.6px;color:#000000;transform:scaleX(1.0122);clip-path:inset(-5px 3.90px -5px -5px);">AaBbCcDc</span>
<span class="t" style="left:757.26px;top:112px;font-size:11.8px;color:#5a5a5a;transform:scaleX(0.9685);">¶ No Spac...</span>
<span class="t" style="left:831.23px;top:83px;font-size:19px;color:#2f66b8;-webkit-text-stroke:0.4px #ffffff;transform:scaleX(0.9247);clip-path:inset(-5px 6.80px -5px -5px);">AaBbCc</span>
<span class="t" style="left:833.26px;top:112px;font-size:11.8px;color:#5a5a5a;transform:scaleX(0.9810);">Heading 1</span>
<span class="t" style="left:902.50px;top:85px;font-size:15.5px;color:#2f66b8;-webkit-text-stroke:0.25px #ffffff;transform:scaleX(0.9407);clip-path:inset(-5px 5.45px -5px -5px);">AaBbCcD</span>
<span class="t" style="left:905.25px;top:112px;font-size:11.8px;color:#5a5a5a;transform:scaleX(1.0000);">Heading 2</span>
<span class="t" style="left:975.44px;top:71px;font-size:33.5px;color:#000000;-webkit-text-stroke:0.8px #ffffff;transform:scaleX(0.8864);clip-path:inset(8.40px -5px -5px -5px);">AaB</span>
<span class="t" style="left:993.75px;top:112px;font-size:11.8px;color:#5a5a5a;transform:scaleX(0.9882);">Title</span>
<span class="t" style="left:1047.00px;top:86px;font-size:12px;color:#5a5a5a;letter-spacing:1px;transform:scaleX(0.9957);">AaBbCcD</span>
<span class="t" style="left:1055.48px;top:112px;font-size:11.8px;color:#5a5a5a;transform:scaleX(1.0390);">Subtitle</span>
<span class="t" style="left:1168.62px;top:73px;font-size:12.4px;color:#ffffff;transform:scaleX(0.9778);">Find</span>
<span class="t" style="left:1168.68px;top:96px;font-size:12.4px;color:#ffffff;transform:scaleX(0.9227);">Replace</span>
<span class="t" style="left:1168.74px;top:119px;font-size:12.4px;color:#ffffff;transform:scaleX(0.9118);">Select</span>
<span class="t" style="left:1149.58px;top:92px;font-size:10.4px;color:#e0e0e0;transform:scaleX(0.8696);">a</span>
<span class="t" style="left:1155.24px;top:92px;font-size:10.4px;color:#b060d0;transform:scaleX(1.1200);">b</span>
<span class="t" style="left:1155.17px;top:100px;font-size:10.4px;color:#e0e0e0;transform:scaleX(0.9043);">a</span>
<span class="t" style="left:1160.95px;top:100px;font-size:10.4px;color:#3a96dd;transform:scaleX(1.0105);">c</span>
<span class="t" style="left:613.56px;top:77px;font-size:9.8px;color:#3a96dd;font-weight:700;transform:scaleX(0.9481);">A</span>
<span class="t" style="left:613.66px;top:85px;font-size:9.8px;color:#a855c8;font-weight:700;transform:scaleX(0.9636);">Z</span>
<span class="t" style="left:282.60px;top:227px;font-size:23.3px;color:#ffffff;font-weight:700;text-rendering:geometricPrecision;transform:scaleX(0.9353);">Desktop Pets' Rights: A Growing Concern in the Digital Age</span>
<span class="t" style="left:282.83px;top:270px;font-size:12.8px;color:#ffffff;font-weight:700;transform:scaleX(1.0321);">Introduction</span>
<span class="t" style="left:282.70px;top:300px;font-size:12.3px;color:#ffffff;-webkit-text-stroke:0.2px #ffffff;transform:scaleX(1.1034);">In an increasingly digital world, the concept of pets has expanded beyond the traditional, tangible realm. Desktop</span>
<span class="t" style="left:282.58px;top:320px;font-size:12.3px;color:#ffffff;-webkit-text-stroke:0.2px #ffffff;transform:scaleX(1.0936);">pets, also known as virtual pets or digital companions, have emerged as a phenomenon in recent years, captivating</span>
<span class="t" style="left:283.40px;top:339px;font-size:12.3px;color:#ffffff;-webkit-text-stroke:0.2px #ffffff;transform:scaleX(1.1062);">the hearts and screens of millions worldwide. These virtual creatures bring joy, companionship, and entertainment</span>
<span class="t" style="left:283.40px;top:358px;font-size:12.3px;color:#ffffff;-webkit-text-stroke:0.2px #ffffff;transform:scaleX(1.1160);">to their owners, but as their popularity soars, the question of their rights and ethical treatment has come to the</span>
<span class="t" style="left:283.40px;top:378px;font-size:12.3px;color:#ffffff;-webkit-text-stroke:0.2px #ffffff;transform:scaleX(1.1109);">forefront. In this article, we explore the evolving concept of desktop pets' rights, shedding light on the ethical</span>
<span class="t" style="left:282.85px;top:397px;font-size:12.3px;color:#ffffff;-webkit-text-stroke:0.2px #ffffff;transform:scaleX(1.1064);">considerations surrounding their existence in our digital lives.</span>
<span class="t" style="left:282.87px;top:457px;font-size:12.8px;color:#ffffff;font-weight:700;transform:scaleX(0.9789);">Ethical Considerations</span>
<span class="t" style="left:283.40px;top:487px;font-size:12.3px;color:#ffffff;-webkit-text-stroke:0.2px #ffffff;transform:scaleX(1.1048);">As desktop pets continue to gain popularity, ethical questions surrounding their rights and well-being have emerged.</span>
<span class="t" style="left:283.40px;top:506px;font-size:12.3px;color:#ffffff;-webkit-text-stroke:0.2px #ffffff;transform:scaleX(1.0988);">While these creatures may not exist in the physical world, they do possess a level of sentience within the digital</span>
<span class="t" style="left:282.58px;top:526px;font-size:12.3px;color:#ffffff;-webkit-text-stroke:0.2px #ffffff;transform:scaleX(1.0998);">realm, leading some to argue that they deserve certain rights and considerations.</span>
<span class="t" style="left:282.71px;top:555px;font-size:12.3px;color:#ffffff;-webkit-text-stroke:0.2px #ffffff;transform:scaleX(1.0936);">Right to Existence: Do desktop pets have a right to exist in the digital realm?</span>
<span class="t" style="left:282.71px;top:585px;font-size:12.3px;color:#ffffff;-webkit-text-stroke:0.2px #ffffff;transform:scaleX(1.0908);">Responsible Ownership: Users should approach desktop pets with a sense of responsibility, acknowledging the</span>
<span class="t" style="left:283.40px;top:604px;font-size:12.3px;color:#ffffff;-webkit-text-stroke:0.2px #ffffff;transform:scaleX(1.0968);">virtual being's needs and emotional experiences.</span>
<span class="t" style="left:6.77px;top:656px;font-size:11.6px;color:#f4f4f4;transform:scaleX(0.9707);">Page 1 of 2</span>
<span class="t" style="left:84.21px;top:655px;font-size:11.6px;color:#f4f4f4;transform:scaleX(0.9839);">596 words</span>
<span class="t" style="left:187.86px;top:655px;font-size:11.6px;color:#f4f4f4;transform:scaleX(0.9842);">English (United States)</span>
<span class="t" style="left:1245.32px;top:655px;font-size:11.6px;color:#f4f4f4;transform:scaleX(0.9088);">100%</span>
<span class="t" style="left:1217.28px;top:683px;font-size:11.4px;color:#ffffff;transform:scaleX(1.0366);">9:59 PM</span>
<span class="t" style="left:1205.25px;top:699px;font-size:11.4px;color:#ffffff;transform:scaleX(1.1015);">9/26/2023</span>
<span class="t" style="left:198.60px;top:692px;font-size:9.6px;color:#ffffff;font-weight:700;transform:scaleX(0.9946);">W</span>
</div>
</body>
</html>
